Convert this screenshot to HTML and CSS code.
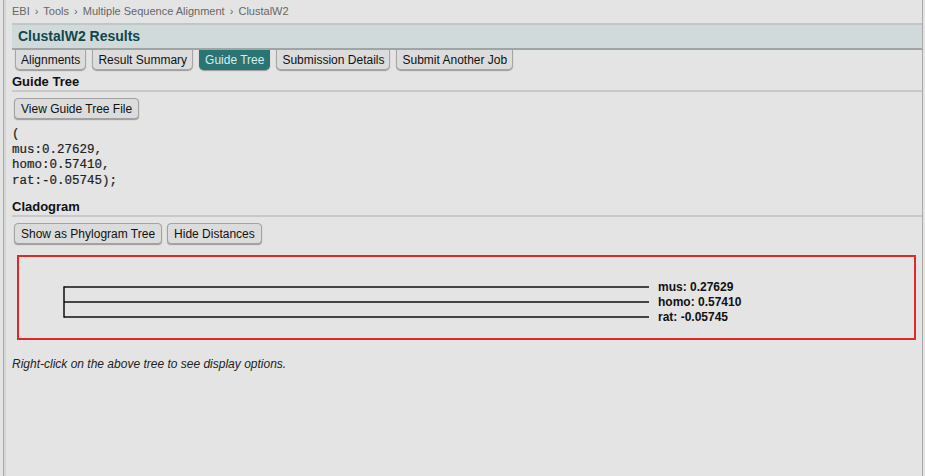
FILE: index.html
```html
<!DOCTYPE html>
<html lang="en">
  <head>
    <meta charset="UTF-8" />
    <link rel="stylesheet" href="styles.css">
  </head>
  <body>
    <div class="page">
      <div class="crumbs">
        EBI <span class="sep">&rsaquo;</span> Tools <span class="sep">&rsaquo;</span> Multiple Sequence Alignment <span class="sep">&rsaquo;</span> ClustalW2
      </div>
      <div class="title-bar">ClustalW2 Results</div>
      <div class="tabs">
        <span class="tab">Alignments</span>
        <span class="tab">Result Summary</span>
        <span class="tab active">Guide Tree</span>
        <span class="tab">Submission Details</span>
        <span class="tab">Submit Another Job</span>
      </div>

      <h2 class="section">Guide Tree</h2>
      <div class="buttons">
        <button class="btn">View Guide Tree File</button>
      </div>
      <pre class="newick">(
mus:0.27629,
homo:0.57410,
rat:-0.05745);</pre>

      <h2 class="section">Cladogram</h2>
      <div class="buttons">
        <button class="btn">Show as Phylogram Tree</button>
        <button class="btn">Hide Distances</button>
      </div>
      <div class="tree-box">
        <svg width="897" height="81" class="tree">
          <g stroke="#111" stroke-width="1.5" fill="none">
            <line x1="45" y1="30" x2="630" y2="30" />
            <line x1="45" y1="45" x2="630" y2="45" />
            <line x1="45" y1="60" x2="630" y2="60" />
            <line x1="45" y1="29.25" x2="45" y2="60.75" />
          </g>
          <g class="labels">
            <text x="639" y="34">mus: 0.27629</text>
            <text x="639" y="49">homo: 0.57410</text>
            <text x="639" y="64">rat: -0.05745</text>
          </g>
        </svg>
      </div>
      <p class="hint">Right-click on the above tree to see display options.</p>
    </div>
  </body>
</html>
```

FILE: styles.css
```css
* {
  box-sizing: border-box;
}

body {
  margin: 0;
  background-color: #e4e4e4;
  font-family: "Liberation Sans", Arial, sans-serif;
  font-size: 12px;
  color: #111;
}

.page {
  margin-left: 3px;
  margin-right: 2px;
  min-height: 476px;
  border-left: 1px solid #a8a8a8;
  border-right: 1px solid #a8a8a8;
  box-shadow: inset 2px 0 0 #d6d6d6;
  padding-left: 8px;
}

.crumbs {
  height: 23px;
  padding-top: 5px;
  font-size: 11px;
  color: #666;
}

.crumbs .sep {
  margin: 0 2px;
}

.title-bar {
  height: 27px;
  background-color: #d0dadb;
  border-top: 2px solid #bfc6c7;
  border-bottom: 2px solid #9ea5a5;
  padding: 3px 6px 0;
  font-size: 14px;
  font-weight: bold;
  color: #10464c;
}

.tabs {
  display: flex;
  gap: 6px;
  padding-left: 3px;
}

.tab {
  height: 20px;
  padding: 3px 5px 0;
  background-color: #dcdcdc;
  border: 1px solid #a6a6a6;
  border-top: none;
  border-radius: 0 0 5px 5px;
  box-shadow: 0 1px 1px #999;
}

.tab.active {
  background-color: #2a7472;
  border-color: #2a7472;
  color: #d8eeee;
}

.section {
  margin: 4px 0 0;
  padding-bottom: 1px;
  border-bottom: 2px solid #c8c8c8;
  font-size: 13px;
  font-weight: bold;
  color: #111;
}

.buttons {
  display: flex;
  gap: 5px;
  padding: 6px 0 0 2px;
}

.btn {
  height: 21px;
  padding: 0 6px;
  background-color: #dcdcdc;
  border: 1px solid #a2a2a2;
  border-radius: 4px;
  box-shadow: 0 1px 1px #999;
  font-family: "Liberation Sans", Arial, sans-serif;
  font-size: 12px;
  color: #111;
}

.newick {
  margin: 8px 0 10px;
  font-family: "Liberation Mono", "Courier New", monospace;
  font-size: 12.5px;
  line-height: 15.5px;
  color: #222;
  -webkit-text-stroke: 0.2px #222;
}

.tree-box {
  margin: 11px 6px 0 5px;
  height: 85px;
  border: 2px solid #dc2a2a;
}

.tree {
  display: block;
}

.labels {
  font-family: "Liberation Sans", Arial, sans-serif;
  font-size: 12px;
  font-weight: bold;
  fill: #111;
}

.hint {
  margin: 17px 0 0;
  font-style: italic;
  color: #222;
}
```
